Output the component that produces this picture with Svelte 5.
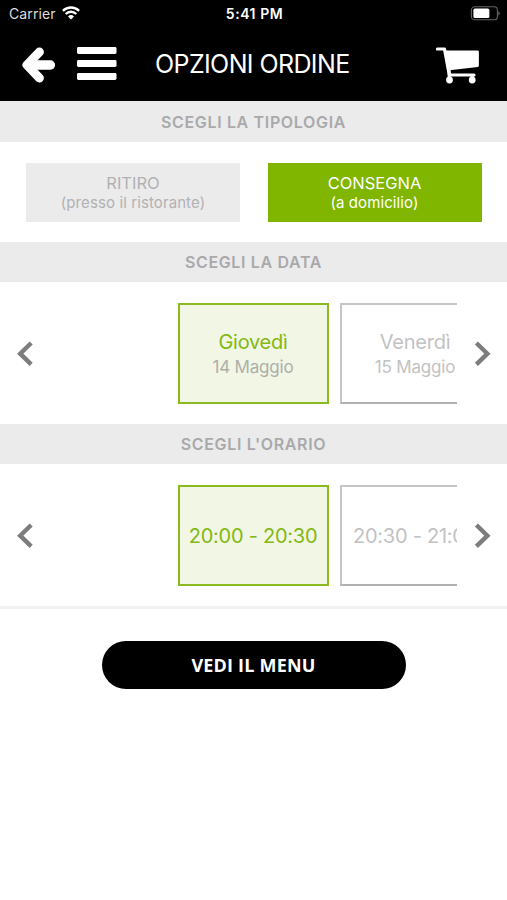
<script>
  const types = [
    { id: 'pickup', label: 'RITIRO', note: '(presso il ristorante)' },
    { id: 'delivery', label: 'CONSEGNA', note: '(a domicilio)' }
  ];

  const days = [
    { label: 'Giovedì', note: '14 Maggio' },
    { label: 'Venerdì', note: '15 Maggio' }
  ];

  const times = [
    { label: '20:00 - 20:30' },
    { label: '20:30 - 21:00' }
  ];

  let type = $state('delivery');
  let day = $state(0);
  let time = $state(0);

  function clamp(value, list) {
    return Math.max(0, Math.min(list.length - 1, value));
  }
</script>

{#snippet picker(items, selected, pick)}
  <div class="picker">
    <button class="chevron" aria-label="Precedente" onclick={() => pick(clamp(selected - 1, items))}>
      <svg width="17" height="26" viewBox="0 0 17 26">
        <path d="M15.2 2 4.2 12.7 15.2 23.4" />
      </svg>
    </button>
    <div class="track">
      {#each items as item, i}
        <button class="card" class:selected={i === selected} onclick={() => pick(i)}>
          <span class="label">{item.label}</span>
          {#if item.note}
            <span class="note">{item.note}</span>
          {/if}
        </button>
      {/each}
    </div>
    <button class="chevron" aria-label="Successivo" onclick={() => pick(clamp(selected + 1, items))}>
      <svg width="17" height="26" viewBox="0 0 17 26">
        <path d="M2.4 2 13.4 12.7 2.4 23.4" />
      </svg>
    </button>
  </div>
{/snippet}

<div class="app">
  <header>
    <div class="status">
      <div class="carrier">
        <span>Carrier</span>
        <svg width="18" height="14" viewBox="0 0 18 14">
          <path d="M.9 4.9a11.4 11.4 0 0 1 16.2 0M3.7 8a7.4 7.4 0 0 1 10.6 0" fill="none" stroke="#fff" stroke-width="2.3" />
          <path d="M9 13.4 6 10.4a4.3 4.3 0 0 1 6 0z" fill="#fff" />
        </svg>
      </div>
      <span class="clock">5:41 PM</span>
      <svg class="battery" width="31" height="15" viewBox="0 0 31 15">
        <rect x="2.4" y=".8" width="26" height="13" rx="3.4" fill="none" stroke="#666" stroke-width="1.1" />
        <rect x="4.4" y="2.6" width="16" height="9.4" rx="1.6" fill="#fff" />
        <path d="M29.4 5.2c1.8.8 1.8 3.6 0 4.4z" fill="#666" />
      </svg>
    </div>
    <div class="bar">
      <svg class="back" width="34" height="36" viewBox="0 0 34 36">
        <path class="head" d="M17.4 5 5 18 17.4 31" />
        <path class="shaft" d="M6 18h22.4" />
        <path class="fill" d="M5 18 14 10v16z" />
      </svg>
      <svg class="menu" width="40" height="34" viewBox="0 0 40 34">
        <rect width="39.5" height="7" rx="1.4" />
        <rect y="13" width="39.5" height="7" rx="1.4" />
        <rect y="26" width="39.5" height="7" rx="1.4" />
      </svg>
      <h1>OPZIONI ORDINE</h1>
      <svg class="cart" width="43" height="37" viewBox="0 0 43 37">
        <path d="M1.5 2h7l4.8 26H38" fill="none" stroke="#fff" stroke-width="3.2" stroke-linecap="round" stroke-linejoin="round" />
        <path d="M9.6 3.4H41.6q1.3 0 1.3 1.3V18.6q0 1.2-1.2 1.4L13.6 23.3z" fill="#fff" />
        <circle cx="13.5" cy="33" r="3.4" fill="#fff" />
        <circle cx="36.2" cy="33" r="3.4" fill="#fff" />
        <path d="M13.2 22v10M36.2 28v4" stroke="#fff" stroke-width="3" />
      </svg>
    </div>
  </header>

  <h2 class="first">SCEGLI LA TIPOLOGIA</h2>
  <div class="types">
    {#each types as t}
      <button class="type" class:active={t.id === type} onclick={() => (type = t.id)}>
        <span class="type-label">{t.label}</span>
        <span class="type-note">{t.note}</span>
      </button>
    {/each}
  </div>

  <h2>SCEGLI LA DATA</h2>
  {@render picker(days, day, (i) => (day = i))}

  <h2>SCEGLI L'ORARIO</h2>
  {@render picker(times, time, (i) => (time = i))}

  <div class="footer">
    <button class="submit">VEDI IL MENU</button>
  </div>
</div>

<style>
  :global(body) {
    background: #fff;
  }

  .app {
    width: 507px;
    height: 900px;
    overflow: hidden;
    background: #fff;
    font-family: Inter, "Liberation Sans", sans-serif;
  }

  button {
    margin: 0;
    padding: 0;
    border: 0;
    background: none;
    font: inherit;
    cursor: pointer;
  }

  svg {
    display: block;
  }

  header {
    box-sizing: border-box;
    height: 101px;
    background: #000;
    color: #fff;
  }

  .status {
    display: grid;
    grid-template-columns: 1fr auto 1fr;
    align-items: center;
    height: 27px;
    padding: 0 7px 0 9px;
    font-size: 14px;
  }

  .carrier {
    display: flex;
    align-items: center;
    gap: 6px;
    color: #ddd;
    letter-spacing: 0.1px;
  }

  .carrier svg {
    margin-top: -2px;
  }

  .clock {
    font-weight: 600;
    letter-spacing: 0.55px;
  }

  .battery {
    justify-self: end;
  }

  .bar {
    display: flex;
    align-items: center;
    height: 74px;
    padding: 0 28px 0 22px;
  }

  .back {
    margin-top: 2px;
    fill: none;
    stroke: #fff;
    stroke-linecap: round;
    stroke-linejoin: round;
  }

  .head {
    stroke-width: 9;
  }

  .shaft {
    stroke-width: 9.4;
  }

  .fill {
    fill: #fff;
  }

  .menu {
    margin-left: 21px;
    fill: #fff;
  }

  h1 {
    margin: 0 0 0 38px;
    font-size: 25px;
    font-weight: 400;
    letter-spacing: -0.6px;
    white-space: nowrap;
  }

  .cart {
    margin-left: auto;
    margin-top: 2px;
  }

  h2 {
    display: flex;
    align-items: center;
    justify-content: center;
    height: 40px;
    margin: 0;
    background: #ebebeb;
    color: #a9a9ab;
    font-size: 16px;
    font-weight: 600;
    letter-spacing: 0.65px;
  }

  h2.first {
    height: 41px;
  }

  .types {
    display: flex;
    justify-content: space-between;
    height: 59px;
    padding: 21px 25.5px 20px 26px;
  }

  .type {
    display: flex;
    flex-direction: column;
    align-items: center;
    justify-content: center;
    width: 214px;
    background: #ebebeb;
    color: #b1b1b3;
  }

  .type.active {
    background: #80b600;
    color: #fff;
  }

  .type-label {
    font-size: 16.5px;
    line-height: 20px;
  }

  .type-note {
    font-size: 15px;
    line-height: 19px;
    letter-spacing: 0.1px;
  }

  .picker {
    display: flex;
    align-items: center;
    justify-content: space-between;
    height: 101px;
    padding: 21px 16px 20px 16px;
  }

  .chevron svg {
    fill: none;
    stroke: #7d7d7d;
    stroke-width: 4.4;
  }

  .track {
    display: flex;
    gap: 11px;
    box-sizing: border-box;
    width: 406px;
    padding-left: 127px;
    overflow: hidden;
  }

  .card {
    display: flex;
    flex: none;
    flex-direction: column;
    align-items: center;
    justify-content: center;
    box-sizing: border-box;
    width: 151px;
    height: 101px;
    border: 2px solid #c5c5c7;
    border-bottom-color: #b2b2b4;
    padding-top: 1px;
    color: #c2c2c4;
    white-space: nowrap;
  }

  .card.selected {
    border-color: #8aba20;
    background: #f1f6e5;
    color: #84b812;
  }

  .label {
    font-size: 20px;
    line-height: 25px;
    letter-spacing: -0.25px;
  }

  .note {
    font-size: 17px;
    line-height: 24px;
    letter-spacing: -0.2px;
  }

  .selected .note {
    color: #adb0aa;
  }

  .footer {
    display: flex;
    justify-content: center;
    border-top: 3px solid #f1f1f1;
    padding-top: 32px;
  }

  .submit {
    width: 304px;
    height: 48px;
    border-radius: 24px;
    background: #000;
    color: #fff;
    font-family: "Open Sans", "Noto Sans", sans-serif;
    font-size: 18px;
    font-weight: 700;
    letter-spacing: 0.2px;
  }
</style>
